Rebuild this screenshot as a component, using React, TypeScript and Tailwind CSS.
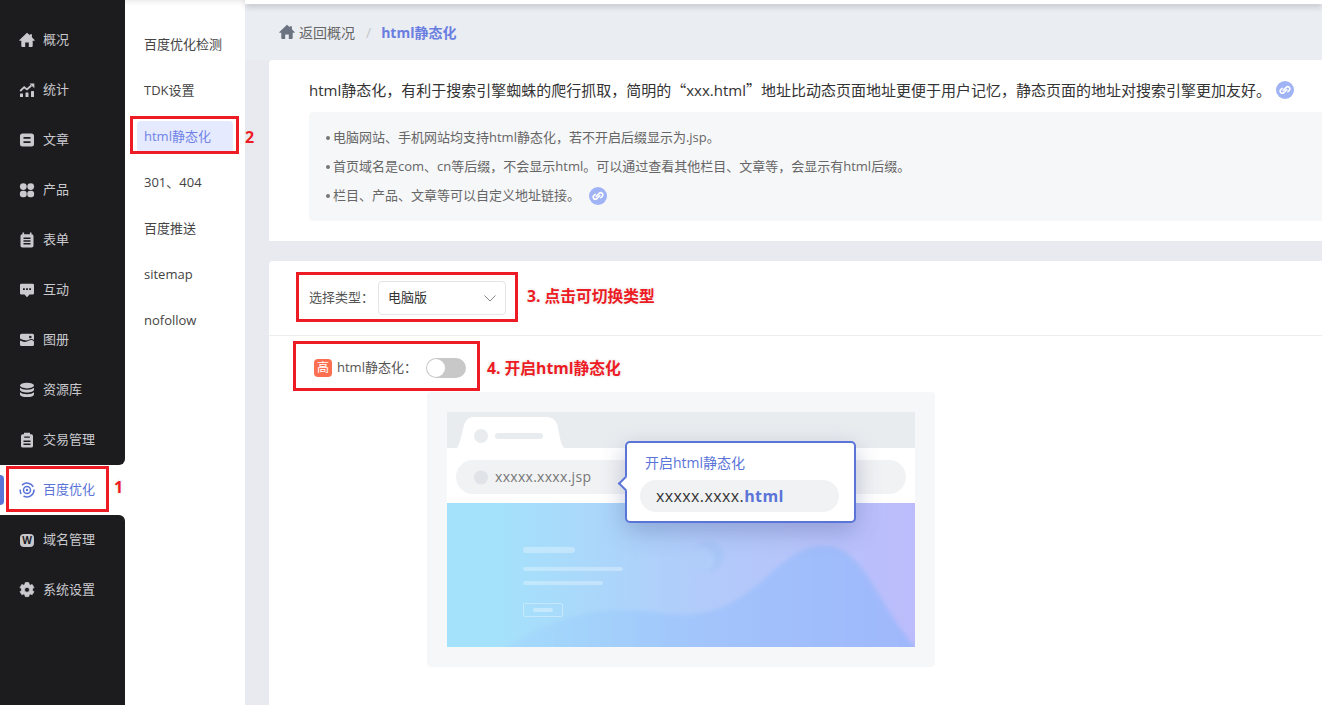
import type { ReactNode } from "react";

function G({ children }: { children: ReactNode }) {
  return (
    <svg viewBox="0 0 16 16" className="w-4 h-4" fill="currentColor">
      {children}
    </svg>
  );
}

const homePath = "M8 .8.4 7.900c-.3.3-.1.800.3.800H2.300v5.300c0 .5.400.9.900.9h3V10.400h3.600v4.500h3c.5 0 .9-.4.900-.9V8.700h1.600c.4 0 .6-.5.300-.8L12.900 5.200V2.300h-2v1L8 .8z";

const icons: Record<string, ReactNode> = {
  home: (
    <G>
      <path d={homePath} />
    </G>
  ),
  stats: (
    <G>
      <rect x="1" y="11.500" width="3" height="3.500" rx="0.500" />
      <rect x="6.500" y="10.500" width="3" height="4.500" rx="0.500" />
      <rect x="12" y="9" width="3" height="6" rx="0.500" />
      <path d="M1.200 9 5.200 5.200 8 7.400 12.300 3.500" fill="none" stroke="currentColor" strokeWidth="1.800" />
      <path d="M10.500 1.500h4.800v4.800z" />
    </G>
  ),
  article: (
    <G>
      <path d="M3.500 1.500h9A2.500 2.500 0 0 1 15 4v8a2.500 2.500 0 0 1-2.500 2.500h-9A2.500 2.500 0 0 1 1 12V4a2.500 2.500 0 0 1 2.500-2.500zM4.500 4.900v1.800h7V4.900zM4.500 9.300v1.800h7V9.300z" fillRule="evenodd" />
    </G>
  ),
  product: (
    <G>
      <circle cx="4.300" cy="4.600" r="3.400" />
      <circle cx="11.700" cy="4.600" r="3.400" />
      <rect x="0.900" y="8.700" width="6.800" height="6.600" rx="2.800" />
      <rect x="8.300" y="8.700" width="6.800" height="6.600" rx="2.800" />
    </G>
  ),
  form: (
    <G>
      <path d="M3.500 2.200V.5h1.600v1.700h5.800V.5h1.600v1.700h.3A1.700 1.700 0 0 1 14.500 3.900v9.900a1.700 1.700 0 0 1-1.700 1.700H3.200a1.700 1.700 0 0 1-1.700-1.700V3.900A1.700 1.700 0 0 1 3.200 2.200zM4.500 5.400v1.500h7V5.400zM4.500 8.200v1.500h7V8.200zM4.500 11v1.500h7V11z" fillRule="evenodd" />
    </G>
  ),
  chat: (
    <G>
      <path d="M2.300 1.800h11.400A1.300 1.300 0 0 1 15 3.100v8.200a1.300 1.300 0 0 1-1.300 1.300h-3.200L8 15.200 5.500 12.600H2.300A1.300 1.300 0 0 1 1 11.300V3.100a1.300 1.300 0 0 1 1.300-1.300zM4 6.200v1.800h1.800V6.200zM7.100 6.200v1.800h1.800V6.200zM10.200 6.200v1.800H12V6.200z" fillRule="evenodd" />
    </G>
  ),
  gallery: (
    <G>
      <path d="M2.500 1.800h11A1.500 1.500 0 0 1 15 3.300V8c-2-1.800-3.600-1-5.200-.2S6 9 1 6.500V3.300a1.500 1.500 0 0 1 1.500-1.500zM11.300 3.700a1.300 1.300 0 1 0 0 2.600 1.300 1.300 0 0 0 0-2.600z" fillRule="evenodd" />
      <path d="M1 8.600c4.500 2.300 6.800 1 9-.1 1.800-.9 3.300-.9 5 .9v3a1.500 1.500 0 0 1-1.500 1.500h-11A1.500 1.500 0 0 1 1 12.400z" />
    </G>
  ),
  db: (
    <G>
      <ellipse cx="8" cy="3.600" rx="7" ry="2.800" />
      <path d="M1 5.800v2c0 1.500 3.100 2.700 7 2.700s7-1.200 7-2.700v-2c-1.200 1.300-4 2-7 2s-5.800-.7-7-2z" />
      <path d="M1 10.200v2.200c0 1.500 3.100 2.700 7 2.700s7-1.200 7-2.700v-2.200c-1.200 1.300-4 2-7 2s-5.800-.7-7-2z" />
    </G>
  ),
  trade: (
    <G>
      <path d="M5 .8h6v1.400h1.300A1.700 1.700 0 0 1 14 3.900v10a1.700 1.700 0 0 1-1.700 1.700H3.700A1.700 1.700 0 0 1 2 13.900v-10a1.700 1.700 0 0 1 1.700-1.700H5zM5.200 4.500V5.800h5.600V4.500zM4.500 8.500v1.600h7V8.500zM4.500 11.500v1.600h7v-1.600z" fillRule="evenodd" />
    </G>
  ),
  baidu: (
    <G>
      <path d="M3 3.200A7 7 0 0 1 14.200 4.800" fill="none" stroke="currentColor" strokeWidth="1.500" />
      <path d="M15 7.500a7 7 0 0 1-10.500 6.500" fill="none" stroke="currentColor" strokeWidth="1.500" />
      <path d="M2.200 12a7 7 0 0 1-1-4.500" fill="none" stroke="currentColor" strokeWidth="1.500" />
      <circle cx="8" cy="8" r="3.500" fill="none" stroke="currentColor" strokeWidth="1.500" />
      <circle cx="8" cy="8" r="1.200" />
    </G>
  ),
  domain: (
    <span className="w-[14px] h-[13px] mx-px rounded-sm bg-[#c8c8cc] text-[#1c1c1e] text-[10px] leading-[13px] font-bold text-center">
      W
    </span>
  ),
  gear: (
    <G>
      <path d="M6.300.6h3.400l.5 2 1 .6 2-.6 1.700 2.900-1.500 1.500v1.200l1.500 1.500-1.700 2.900-2-.6-1 .6-.5 2H6.300l-.5-2-1-.6-2 .6L1.100 9.700l1.500-1.500V7L1.100 5.500l1.700-2.900 2 .6 1-.6zM8 5.300a2.500 2.500 0 1 0 0 5 2.500 2.500 0 0 0 0-5z" fillRule="evenodd" strokeLinejoin="round" stroke="currentColor" strokeWidth="0.800" />
    </G>
  ),
};

const menu = [
  ["home", "概况"],
  ["stats", "统计"],
  ["article", "文章"],
  ["product", "产品"],
  ["form", "表单"],
  ["chat", "互动"],
  ["gallery", "图册"],
  ["db", "资源库"],
  ["trade", "交易管理"],
  ["baidu", "百度优化"],
  ["domain", "域名管理"],
  ["gear", "系统设置"],
];

const subMenu = ["百度优化检测", "TDK设置", "html静态化", "301、404", "百度推送", "sitemap", "nofollow"];

function Sidebar() {
  return (
    <aside className="w-[125px] shrink-0 flex flex-col bg-white">
      <div className="h-[15px] bg-[#1c1c1e]" />
      {menu.map(([icon, label], i) => (
        <div
          key={label}
          className={`relative h-[50px] flex items-center gap-2 pl-[19px] text-[13px] ${
            i === 9 ? "bg-white text-[#5a74d8]" : "bg-[#1c1c1e] text-[#c9c9ce]"
          } ${i === 8 ? "rounded-br-md" : ""} ${i === 10 ? "rounded-tr-md" : ""}`}
        >
          {i === 9 && <span className="absolute left-0 top-[10px] w-1 h-[30px] rounded-r bg-[#5a74d8]" />}
          {icons[icon]}
          <span>{label}</span>
        </div>
      ))}
      <div className="flex-1 bg-[#1c1c1e]" />
    </aside>
  );
}

function SubNav() {
  return (
    <nav className="w-[120px] shrink-0 bg-white pt-[22px] px-3 shadow-[inset_0_6px_6px_-6px_rgba(0,0,0,0.15)]">
      {subMenu.map((s) => (
        <div key={s} className="h-[46px] flex items-center">
          <span
            className={`w-full h-8 flex items-center rounded px-[7px] text-[13px] ${
              s === "html静态化" ? "bg-[#e6eafe] text-[#6f83e6]" : "text-[#444]"
            }`}
          >
            {s}
          </span>
        </div>
      ))}
    </nav>
  );
}

function LinkIcon() {
  return (
    <svg viewBox="0 0 18 18" className="w-[18px] h-[18px] shrink-0">
      <circle cx="9" cy="9" r="9" fill="#9fb3f5" />
      <path
        d="M7.200 9.400 10.200 6.400a2.100 2.100 0 0 1 3 3L11.800 10.800M10.800 8.600 7.800 11.600a2.100 2.100 0 0 1-3-3L6.200 7.200"
        fill="none"
        stroke="#fff"
        strokeWidth="1.500"
        strokeLinecap="round"
      />
    </svg>
  );
}

function Illustration() {
  return (
    <div className="ml-[158px] w-[508px] h-[275px] p-5 bg-[#f6f7f9] rounded-sm">
      <div className="relative w-[468px] h-[235px]">
        <svg viewBox="0 0 468 235" className="w-[468px] h-[235px]">
          <defs>
            <linearGradient id="hero" x1="0" x2="1" y1="0" y2="0">
              <stop offset="0.1" stopColor="#a4e2fb" />
              <stop offset="0.55" stopColor="#b2cbfa" />
              <stop offset="1" stopColor="#bcbcfb" />
            </linearGradient>
            <linearGradient id="hill" x1="0" x2="1" y1="0" y2="0">
              <stop offset="0" stopColor="#a4dcfc" />
              <stop offset="0.5" stopColor="#a2c4fb" />
              <stop offset="1" stopColor="#9fb7fb" />
            </linearGradient>
            <filter id="soft" x="-20%" y="-20%" width="140%" height="140%">
              <feGaussianBlur stdDeviation="2" />
            </filter>
            <clipPath id="heroClip">
              <rect x="0" y="91" width="468" height="144" />
            </clipPath>
          </defs>
          <rect x="0" y="0" width="468" height="36" fill="#e9ecef" />
          <rect x="0" y="36" width="468" height="55" fill="#fff" />
          <path d="M10 36C14 32 16 12 19 9 21 6 23 5 27 5H100C105 5 108 8 110 12 112 18 113 32 117 36z" fill="#fff" />
          <circle cx="34" cy="24" r="7" fill="#e9ecef" />
          <rect x="48" y="21" width="48" height="6" rx="3" fill="#e9ecef" />
          <rect x="9" y="48" width="450" height="34" rx="17" fill="#f1f2f4" />
          <circle cx="34" cy="65.500" r="7" fill="#e0e3e7" />
          <rect x="0" y="91" width="468" height="144" fill="url(#hero)" />
          <g clipPath="url(#heroClip)">
            <path d="M50 240C90 215 130 198 173 198 205 198 235 206 256 201 285 195 300 182 325 160 345 142 360 133 378 134 398 135 412 148 428 176 442 200 456 222 472 240z" fill="url(#hill)" filter="url(#soft)" />
            <circle cx="262" cy="144" r="15" fill="#a9c6f8" filter="url(#soft)" />
            <circle cx="254" cy="148" r="13" fill="#b0cdfa" filter="url(#soft)" />
          </g>
          <rect x="76" y="135" width="52" height="6" rx="3" fill="#fff" opacity="0.3" />
          <rect x="76" y="155" width="100" height="4" rx="2" fill="#fff" opacity="0.3" />
          <rect x="76" y="169" width="80" height="4" rx="2" fill="#fff" opacity="0.3" />
          <rect x="76.500" y="191.500" width="39" height="13" rx="1.500" fill="none" stroke="#fff" strokeOpacity="0.35" />
          <rect x="86" y="196" width="20" height="4" rx="2" fill="#fff" opacity="0.35" />
        </svg>
        <span className="absolute left-[48px] top-[55px] text-[14px] leading-5 tracking-[0.3px] text-[#777]">xxxxx.xxxx.jsp</span>
        <div className="absolute left-[178px] top-[29px] w-[231px] h-[82px] rounded-[5px] border-2 border-[#5a74d8] bg-white shadow-[0_8px_24px_rgba(60,70,130,0.3)]">
          <span className="absolute -left-[7px] top-[35px] w-[11px] h-[11px] rotate-45 bg-white border-l-2 border-b-2 border-[#5a74d8]" />
          <div className="relative pl-[18px] pt-[10px] text-[14px] leading-5 text-[#5a74d8]">开启html静态化</div>
          <div className="relative ml-[13px] mt-[7px] w-[199px] h-8 rounded-full bg-[#f1f2f4] pl-4 flex items-center text-[16px] tracking-[0.4px] text-[#333]">
            xxxxx.xxxx.<b className="text-[#5a74d8]">html</b>
          </div>
        </div>
      </div>
    </div>
  );
}

function Annotations() {
  const label = "absolute text-[#ed1c24] font-bold whitespace-nowrap [text-shadow:0_0_3px_#fff,0_0_3px_#ccc]";
  const box = "absolute border-[3px] border-[#ed1c24]";
  return (
    <>
      <div className={`${box} left-[6px] top-[466px] w-[103px] h-[46px]`} />
      <div className={`${box} left-[130px] top-[116px] w-[109px] h-[38px]`} />
      <div className={`${box} left-[296px] top-[272px] w-[222px] h-[50px]`} />
      <div className={`${box} left-[293px] top-[341px] w-[187px] h-[50px]`} />
      <span className={`${label} left-[114px] top-[477px] text-[16px] leading-5`}>1</span>
      <span className={`${label} left-[245px] top-[127px] text-[16px] leading-5`}>2</span>
      <span className={`${label} left-[527px] top-[286px] text-[15.750px] leading-5`}>3. 点击可切换类型</span>
      <span className={`${label} left-[487px] top-[358px] text-[15.750px] leading-5`}>4. 开启html静态化</span>
    </>
  );
}

function Dot() {
  return <span className="w-1 h-1 rounded-full bg-[#777] ml-px mr-[3px] shrink-0" />;
}

export default function App() {
  return (
    <div className="relative h-screen w-full overflow-hidden flex bg-white font-['Open_Sans','Noto_Sans_CJK_SC',sans-serif]">
      <Sidebar />
      <SubNav />
      <main className="flex-1 min-w-0 flex flex-col bg-[#e8eaef]">
        <div className="h-[4px] bg-white shadow-[0_2px_6px_rgba(0,0,0,0.25)] relative" />
        <div className="h-[56px] shrink-0 bg-[#eaedf2] pl-[34px] flex items-center text-[14px]">
          <svg viewBox="0 0 16 16" className="w-4 h-4 text-[#6b7280]" fill="currentColor">
            <path d={homePath} />
          </svg>
          <span className="ml-1 text-[#666]">返回概况</span>
          <span className="ml-[11px] mr-[10px] text-[#c4c7cc]">/</span>
          <span className="font-bold text-[#6a7de0]">html静态化</span>
        </div>
        <section className="ml-6 h-[181px] shrink-0 bg-white rounded-tl pl-10 pt-[19px]">
          <div className="flex items-center h-[22px] text-[15px] text-[#333] whitespace-nowrap">
            <span>
              html静态化，有利于搜索引擎蜘蛛的爬行抓取，简明的
              <span className="font-['Noto_Sans_CJK_SC',sans-serif]">“</span>
              xxx.html
              <span className="font-['Noto_Sans_CJK_SC',sans-serif]">”</span>
              地址比动态页面地址更便于用户记忆，静态页面的地址对搜索引擎更加友好。
            </span>
            <span className="ml-[5px]"><LinkIcon /></span>
          </div>
          <div className="mt-[11px] h-[109px] bg-[#f6f7f9] rounded-l-sm pl-[16px] pt-[12px] text-[13px] text-[#666]">
            <p className="h-[28px] flex items-center"><Dot />电脑网站、手机网站均支持html静态化，若不开启后缀显示为.jsp。</p>
            <p className="h-[29px] flex items-center"><Dot />首页域名是com、cn等后缀，不会显示html。可以通过查看其他栏目、文章等，会显示有html后缀。</p>
            <p className="h-[30px] flex items-center"><Dot />栏目、产品、文章等可以自定义地址链接。<span className="ml-[9px]"><LinkIcon /></span></p>
          </div>
        </section>
        <section className="ml-6 mt-5 flex-1 bg-white rounded-tl">
          <div className="h-[75px] border-b border-[#ebedf0] pl-10 flex items-center text-[13px] text-[#555]">
            <span>选择类型：</span>
            <div className="ml-[4px] w-[128px] h-[34px] border border-[#e2e4e8] rounded-sm pl-[9px] pr-[9px] flex items-center justify-between text-[#333]">
              <span>电脑版</span>
              <svg viewBox="0 0 12 7" className="w-3 h-[7px]" fill="none" stroke="#888">
                <path d="M.5.5 6 6 11.500.5" />
              </svg>
            </div>
          </div>
          <div className="h-[48px] pl-[45px] pt-[8px] box-content flex items-center text-[13px] text-[#555]">
            <span className="w-[18px] h-[18px] rounded-sm bg-[#fb6f50] text-white text-[12px] leading-[18px] text-center">高</span>
            <span className="ml-[5px]">html静态化：</span>
            <span className="ml-[9px] relative w-10 h-5 rounded-full bg-[#c8c8c8]">
              <span className="absolute left-[1px] top-[1px] w-[18px] h-[18px] rounded-full bg-white" />
            </span>
          </div>
          <Illustration />
        </section>
      </main>
      <Annotations />
    </div>
  );
}
